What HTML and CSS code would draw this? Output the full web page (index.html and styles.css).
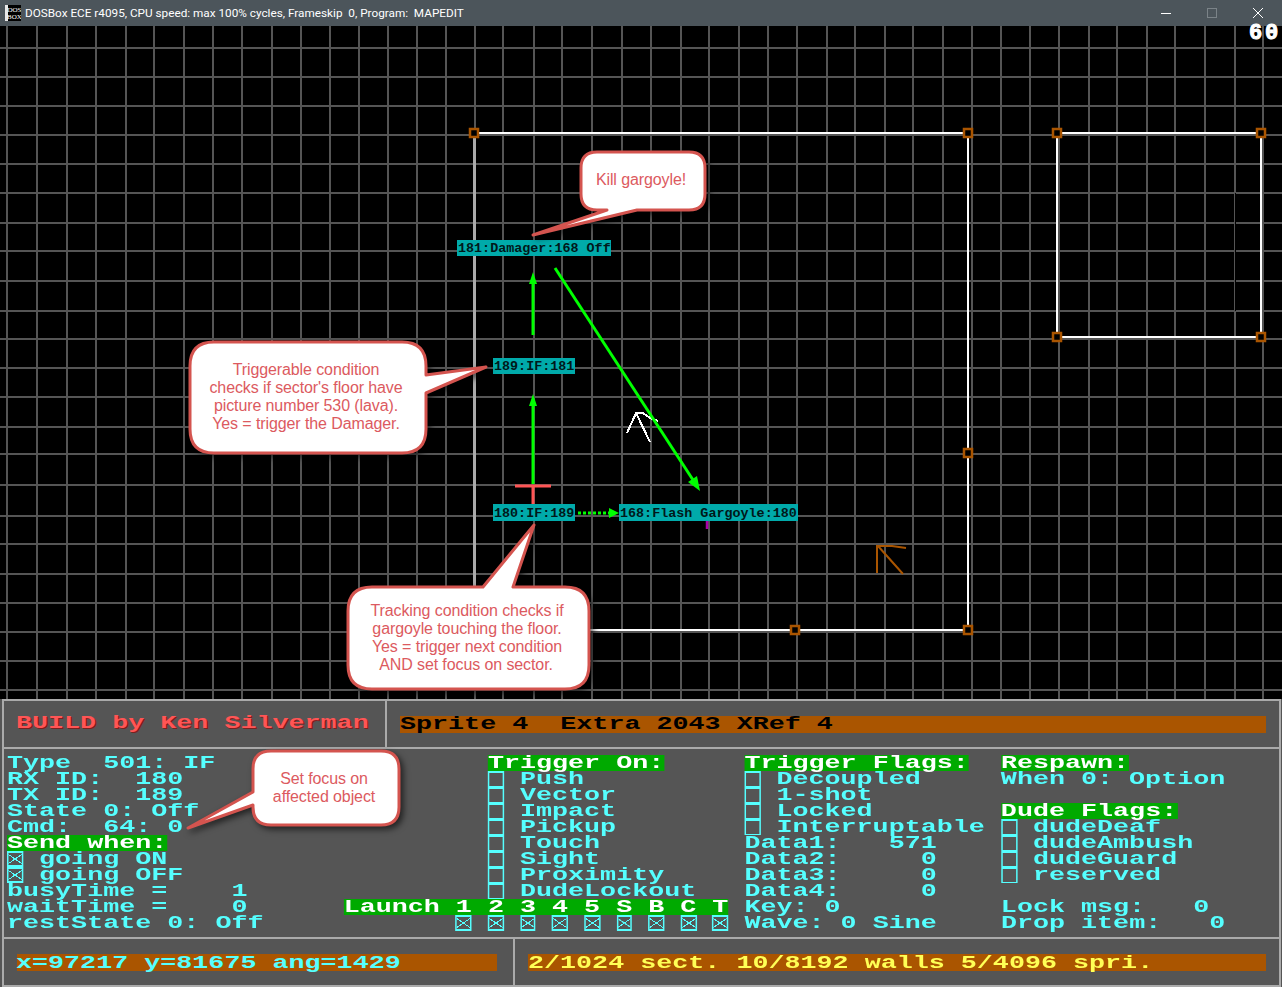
FILE: index.html
```html
<!DOCTYPE html>
<html lang="en">

<head>
    <meta charset="UTF-8">
    <title>DOSBox ECE r4095 - MAPEDIT</title>
    <link rel="stylesheet" href="styles.css">
</head>

<body>
    <div class="window">
        <div class="titlebar">
            <svg class="app-icon" width="16" height="16" viewBox="0 0 16 16">
                <rect width="16" height="16" fill="#000" />
                <rect x="0" y="0" width="3" height="16" fill="#e8e8e8" />
                <text class="icon-text" x="9.5" y="7">DOS</text>
                <text class="icon-text" x="9.5" y="14">BOX</text>
            </svg>
            <span class="title">DOSBox ECE r4095, CPU speed: max 100% cycles, Frameskip&nbsp; 0, Program:&nbsp; MAPEDIT</span>
            <div class="controls">
                <span class="ctl"><svg width="12" height="12" viewBox="0 0 12 12"><path class="ctl-line" d="M1 6.5H11" /></svg></span>
                <span class="ctl"><svg width="12" height="12" viewBox="0 0 12 12"><rect class="ctl-dim" x="1.5" y="1.5" width="9" height="9" /></svg></span>
                <span class="ctl"><svg width="12" height="12" viewBox="0 0 12 12"><path class="ctl-line" d="M1 1L11 11M11 1L1 11" /></svg></span>
            </div>
        </div>

        <svg class="map" width="1282" height="673" viewBox="0 26 1282 673">
            <path class="grid" d="M7 26V699M37 26V699M67 26V699M96 26V699M126 26V699M154 26V699M184 26V699M213 26V699M242 26V699M272 26V699M301 26V699M330 26V699M359 26V699M388 26V699M417 26V699M446 26V699M475 26V699M503 26V699M534 26V699M562 26V699M592 26V699M622 26V699M651 26V699M681 26V699M709 26V699M739 26V699M768 26V699M797 26V699M827 26V699M855 26V699M885 26V699M913 26V699M943 26V699M972 26V699M1001 26V699M1030 26V699M1059 26V699M1089 26V699M1117 26V699M1147 26V699M1175 26V699M1205 26V699M1235 26V699M1263 26V699" />
            <path class="grid" d="M0 48H1282M0 77H1282M0 106H1282M0 135H1282M0 164H1282M0 193H1282M0 223H1282M0 251H1282M0 281H1282M0 311H1282M0 339H1282M0 368H1282M0 397H1282M0 427H1282M0 454H1282M0 485H1282M0 516H1282M0 544H1282M0 574H1282M0 603H1282M0 632H1282M0 661H1282M0 690H1282" />
            <path class="ghost" d="M1235.5 193V311" />

            <path class="wall-grey" d="M474 133V630" />
            <path class="wall" d="M474 133H968V630H474M1057 133H1261V337H1057Z" />

            <g class="vertex">
                <rect x="470" y="129" width="8" height="8" />
                <rect x="964" y="129" width="8" height="8" />
                <rect x="964" y="449" width="8" height="8" />
                <rect x="964" y="626" width="8" height="8" />
                <rect x="791" y="626" width="8" height="8" />
                <rect x="1053" y="129" width="8" height="8" />
                <rect x="1257" y="129" width="8" height="8" />
                <rect x="1053" y="333" width="8" height="8" />
                <rect x="1257" y="333" width="8" height="8" />
            </g>

            <path class="sprite-white" d="M627 433L636 413H643L650 418L658 421M636 413L650 442" />
            <path class="sprite-brown" d="M877 573V546H892L906 548M878 546L903 574" />
            <path class="purple" d="M707 521V529" />

            <path class="cross" d="M515 486H551M533 486V505" />

            <path class="arrow" d="M533 335V280" />
            <path class="arrow-head" d="M533 272L529 284H537Z" />
            <path class="arrow" d="M533 484V403" />
            <path class="arrow-head" d="M533 394L529 406H537Z" />
            <path class="arrow" d="M555 268L695 483" />
            <path class="arrow-head" d="M700 491L688 482L697 476Z" />
            <path class="arrow-dots" d="M578 513H611" />
            <path class="arrow-head" d="M619 513L609 508V518Z" />

            <rect class="tag" x="457" y="240" width="154" height="16" />
            <text class="tag-text" x="458" y="252">181:Damager:168 Off</text>
            <rect class="tag" x="493" y="358" width="82" height="16" />
            <text class="tag-text" x="494" y="370">189:IF:181</text>
            <rect class="tag" x="493" y="504" width="82" height="17" />
            <text class="tag-text" x="494" y="517">180:IF:189</text>
            <rect class="tag" x="619" y="504" width="179" height="17" />
            <text class="tag-text" x="620" y="517">168:Flash Gargoyle:180</text>
        </svg>

        <div class="fps">60</div>

        <div class="panel">
            <div class="panel-inner">
                <div class="row row-top">
                    <div class="cell cell-name"><span class="vga raised brand">BUILD by Ken Silverman</span></div>
                    <div class="cell cell-info">
                        <div class="bar"><span class="vga raised bar-dark">Sprite 4  Extra 2043 XRef 4</span></div>
                    </div>
                </div>
                <div class="row row-main">
<pre class="vga screen">Type  501: IF                 <span class="hl">Trigger On:</span>     <span class="hl">Trigger Flags:</span>  <span class="hl">Respawn:</span>
RX ID:  180                   <span class="box"></span> Push          <span class="box"></span> Decoupled     When 0: Option
TX ID:  189                   <span class="box"></span> Vector        <span class="box"></span> 1-shot
State 0: Off                  <span class="box"></span> Impact        <span class="box"></span> Locked        <span class="hl">Dude Flags:</span>
Cmd:  64: 0                   <span class="box"></span> Pickup        <span class="box"></span> Interruptable <span class="box"></span> dudeDeaf
<span class="hl">Send when:</span>                    <span class="box"></span> Touch         Data1:   571    <span class="box"></span> dudeAmbush
<span class="box on"></span> going ON                    <span class="box"></span> Sight         Data2:     0    <span class="box"></span> dudeGuard
<span class="box on"></span> going OFF                   <span class="box"></span> Proximity     Data3:     0    <span class="box"></span> reserved
busyTime =    1               <span class="box"></span> DudeLockout   Data4:     0
waitTime =    0      <span class="hl">Launch 1 2 3 4 5 S B C T</span> Key: 0          Lock msg:   0
restState 0: Off            <span class="box on"></span> <span class="box on"></span> <span class="box on"></span> <span class="box on"></span> <span class="box on"></span> <span class="box on"></span> <span class="box on"></span> <span class="box on"></span> <span class="box on"></span> Wave: 0 Sine    Drop item:   0</pre>
                </div>
                <div class="row row-bottom">
                    <div class="cell cell-pos">
                        <div class="bar"><span class="vga bar-cyan">x=97217 y=81675 ang=1429</span></div>
                    </div>
                    <div class="cell cell-count">
                        <div class="bar"><span class="vga bar-yellow">2/1024 sect. 10/8192 walls 5/4096 spri.</span></div>
                    </div>
                </div>
            </div>
        </div>

        <!-- callouts sit over both the map and the panel -->
        <svg class="callouts" width="1282" height="987" viewBox="0 0 1282 987">
            <path class="bubble" d="M597 152H689Q705 152 705 168V194Q705 210 689 210H637L533 235L607 210H597Q581 210 581 194V168Q581 152 597 152Z" />
            <text class="bubble-text" x="641" y="185">Kill gargoyle!</text>

            <path class="bubble" d="M214 342H402Q426 342 426 366V375L486 367L426 393V429Q426 453 402 453H214Q190 453 190 429V366Q190 342 214 342Z" />
            <text class="bubble-text" x="306" y="375">Triggerable condition</text>
            <text class="bubble-text" x="306" y="393">checks if sector's floor have</text>
            <text class="bubble-text" x="306" y="411">picture number 530 (lava).</text>
            <text class="bubble-text" x="306" y="429">Yes = trigger the Damager.</text>

            <path class="bubble" d="M372 587H483L534 525L513 587H565Q589 587 589 611V665Q589 689 565 689H372Q348 689 348 665V611Q348 587 372 587Z" />
            <text class="bubble-text" x="467" y="616">Tracking condition checks if</text>
            <text class="bubble-text" x="467" y="634">gargoyle touching the floor.</text>
            <text class="bubble-text" x="467" y="652">Yes = trigger next condition</text>
            <text class="bubble-text" x="466" y="670">AND set focus on sector.</text>

            <path class="bubble" d="M271 751H381Q399 751 399 769V807Q399 825 381 825H271Q253 825 253 807V805L188 828L253 792V769Q253 751 271 751Z" />
            <text class="bubble-text" x="324" y="784">Set focus on</text>
            <text class="bubble-text" x="324" y="802">affected object</text>
        </svg>
    </div>
</body>

</html>
```

FILE: styles.css
```css
html,
body {
    margin: 0;
    padding: 0;
    background-color: #000;
}

.window {
    position: relative;
    width: 1282px;
    height: 987px;
    overflow: hidden;
    display: flex;
    flex-direction: column;
}

/* title bar */
.titlebar {
    height: 26px;
    flex: none;
    display: flex;
    align-items: center;
    padding-left: 5px;
    background-color: #4c555b;
    color: #fff;
    font-family: Roboto, sans-serif;
    font-size: 11.75px;
}

.app-icon {
    flex: none;
}

.icon-text {
    fill: #fff;
    font-family: "Liberation Serif", serif;
    font-size: 7px;
    text-anchor: middle;
}

.title {
    margin-left: 4px;
    white-space: nowrap;
}

.controls {
    margin-left: auto;
    padding-right: 1px;
    display: flex;
}

.ctl {
    width: 46px;
    height: 26px;
    display: flex;
    align-items: center;
    justify-content: center;
}

.ctl-line {
    stroke: #fff;
    stroke-width: 1;
    fill: none;
}

.ctl-dim {
    stroke: #7b8388;
    stroke-width: 1;
    fill: none;
}

/* map */
.map {
    display: block;
    flex: none;
    background-color: #000;
}

.grid {
    stroke: #555;
    stroke-width: 2;
    fill: none;
    shape-rendering: crispEdges;
}

.ghost {
    stroke: #000;
    stroke-width: 1;
    fill: none;
    shape-rendering: crispEdges;
}

.wall {
    stroke: #fff;
    stroke-width: 2;
    fill: none;
    shape-rendering: crispEdges;
}

.wall-grey {
    stroke: #aaa;
    stroke-width: 3;
    fill: none;
    shape-rendering: crispEdges;
}

.vertex rect {
    fill: #000;
    stroke: #aa5500;
    stroke-width: 2.5;
}

.sprite-white {
    stroke: #fff;
    stroke-width: 2;
    fill: none;
    shape-rendering: crispEdges;
}

.sprite-brown {
    stroke: #aa5500;
    stroke-width: 2;
    fill: none;
}

.purple {
    stroke: #aa00aa;
    stroke-width: 2.5;
}

.cross {
    stroke: #ff5555;
    stroke-width: 3;
    fill: none;
}

.arrow {
    stroke: #00ff00;
    stroke-width: 3;
    fill: none;
}

.arrow-dots {
    stroke: #00ff00;
    stroke-width: 3;
    stroke-dasharray: 3 2;
    fill: none;
}

.arrow-head {
    fill: #00ff00;
}

.tag {
    fill: #00aaaa;
}

.tag-text {
    fill: #00181a;
    font-family: "Liberation Mono", monospace;
    font-weight: bold;
    font-size: 13.4px;
}

.fps {
    position: absolute;
    top: 25px;
    left: 1249px;
    width: 33px;
    color: #fff;
    font-family: "Liberation Mono", monospace;
    font-weight: bold;
    font-size: 22px;
    line-height: 18px;
    letter-spacing: 2.8px;
    -webkit-text-stroke: 1px #fff;
}

/* status panel */
.panel {
    flex: none;
    height: 288px;
    padding-left: 2px;
    padding-right: 1px;
    box-sizing: border-box;
    background-color: #555;
}

.panel-inner {
    height: 100%;
    box-sizing: border-box;
    border: 2px solid #aaa;
    display: flex;
    flex-direction: column;
}

.row {
    display: flex;
    box-sizing: border-box;
}

.row-top {
    height: 46px;
    flex: none;
}

.row-main {
    height: 190px;
    flex: none;
    padding: 6px 0 0 3px;
    border-top: 2px solid #aaa;
    overflow: hidden;
}

.row-bottom {
    height: 48px;
    flex: none;
    border-top: 2px solid #aaa;
}

.cell {
    display: flex;
    align-items: center;
    box-sizing: border-box;
}

.cell-name {
    width: 381px;
    padding-left: 12px;
}

.cell-info {
    flex: 1;
    padding: 0 13px;
    border-left: 2px solid #aaa;
}

.cell-pos {
    width: 509px;
    padding: 0 16px 0 13px;
}

.cell-count {
    flex: 1;
    padding: 0 13px;
    border-left: 2px solid #aaa;
}

.bar {
    flex: 1;
    height: 17px;
    background-color: #aa5500;
}

/* stretched to the 8x8 text mode cell: 18px Liberation Mono is 10.8px wide, 16.03px after scale */
.vga {
    display: inline-block;
    font-family: "Liberation Mono", monospace;
    font-size: 18px;
    font-weight: bold;
    line-height: 16px;
    white-space: pre;
    transform: scaleX(1.484);
    transform-origin: left top;
}

.vga.raised {
    transform: translateY(-1px) scaleX(1.484);
}

.bar-cyan {
    transform: translateX(-1px) scaleX(1.484);
}

.screen {
    margin: 0;
    color: #55ffff;
}

.hl {
    display: inline-block;
    height: 16px;
    vertical-align: top;
    background-color: #00aa00;
    color: #fff;
}

.box {
    display: inline-block;
    width: 1ch;
    height: 16px;
    vertical-align: top;
    box-sizing: border-box;
    border: solid #55ffff;
    border-width: 2px 1.5px 1px;
}

.box.on {
    border-width: 2px 1.5px;
    background-image:
        linear-gradient(45deg, transparent 47%, #55ffff 47%, #55ffff 53%, transparent 53%),
        linear-gradient(-45deg, transparent 47%, #55ffff 47%, #55ffff 53%, transparent 53%);
}

.brand {
    color: #ff5555;
    text-shadow: 1px 1px 0 #7a1f1f;
}

.bar-dark {
    color: #000;
}

.bar-cyan {
    color: #55ffff;
}

.bar-yellow {
    color: #ffff55;
}

/* callouts */
.callouts {
    position: absolute;
    top: 0;
    left: 0;
}

.bubble {
    fill: #fff;
    stroke: #d4544f;
    stroke-width: 3;
    stroke-linejoin: round;
    filter: drop-shadow(3px 3px 3px rgba(0, 0, 0, 0.6));
}

.bubble-text {
    fill: #dc5a60;
    font-family: "Liberation Sans", sans-serif;
    font-size: 16px;
    letter-spacing: -0.1px;
    text-anchor: middle;
}
```
